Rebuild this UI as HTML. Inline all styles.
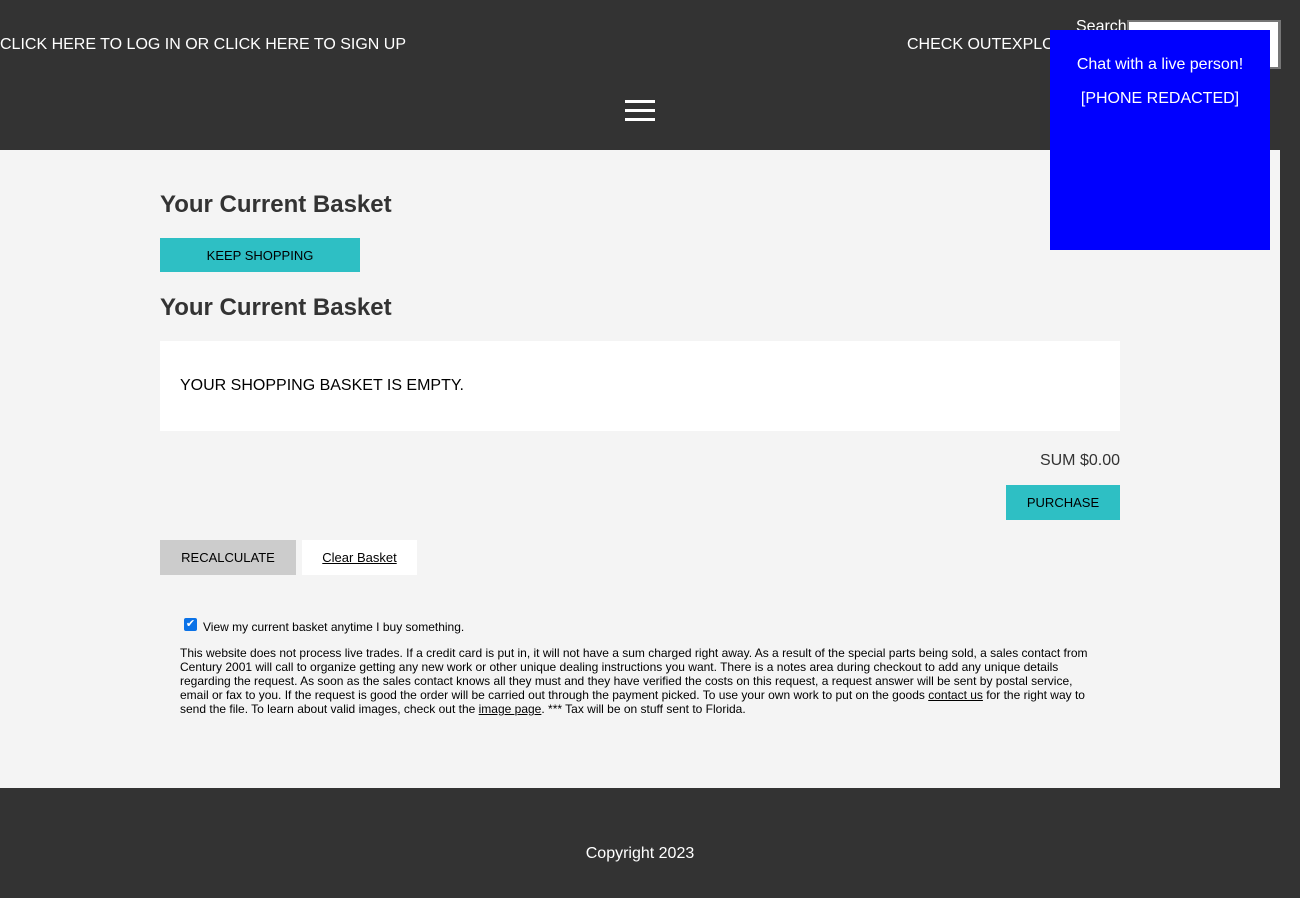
<!DOCTYPE html>
<html><head><style>
body{margin:0;background:#333;font-family:"Liberation Sans",Arial,sans-serif;width:1300px;height:898px;position:relative;overflow:hidden}
.a{position:absolute}
.hdr{color:#fff;font-size:16px}
.main{left:0;top:150px;width:1280px;height:638px;background:#f4f4f4}
h2{margin:0;font-size:24px;color:#333;font-weight:bold}
.btn{font-size:13px;text-align:center;color:#000}
p.s{margin:0;font-size:12px;line-height:14px;color:#000}
</style></head><body>
<div class="a hdr" style="left:0;top:36px">CLICK HERE TO LOG IN OR CLICK HERE TO SIGN UP</div>
<div class="a hdr" style="left:907px;top:36px">CHECK OUTEXPLORE</div>
<div class="a hdr" style="left:1076px;top:18px;font-size:16px">Search</div>
<div class="a" style="left:1127px;top:20px;width:149px;height:45px;background:#fff;border:2px solid #767676;border-right-width:3px"></div>
<div class="a" style="left:625px;top:100px;width:30px;height:3px;background:#fff"></div>
<div class="a" style="left:625px;top:109px;width:30px;height:3px;background:#fff"></div>
<div class="a" style="left:625px;top:118px;width:30px;height:3px;background:#fff"></div>
<div class="a main"></div>
<h2 class="a" style="left:160px;top:191px">Your Current Basket</h2>
<div class="a btn" style="left:160px;top:238px;width:200px;height:34px;line-height:35px;background:#2ebfc4">KEEP SHOPPING</div>
<h2 class="a" style="left:160px;top:294px">Your Current Basket</h2>
<div class="a" style="left:160px;top:341px;width:960px;height:90px;background:#fff"></div>
<div class="a" style="left:180px;top:377px;font-size:16px">YOUR SHOPPING BASKET IS EMPTY.</div>
<div class="a" style="left:1000px;top:452px;width:120px;text-align:right;font-size:16px;color:#333">SUM $0.00</div>
<div class="a btn" style="left:1006px;top:485px;width:114px;height:35px;line-height:35px;background:#2ebfc4">PURCHASE</div>
<div class="a btn" style="left:160px;top:540px;width:136px;height:35px;line-height:35px;background:#ccc">RECALCULATE</div>
<div class="a btn" style="left:302px;top:540px;width:115px;height:35px;line-height:35px;background:#fff;text-decoration:underline">Clear Basket</div>
<div class="a" style="left:184px;top:618px;width:13px;height:13px;background:#0b72e7;border-radius:2px;color:#fff;font-size:11px;line-height:13px;text-align:center">✔</div>
<div class="a" style="left:203px;top:620px;font-size:12px">View my current basket anytime I buy something.</div>
<div class="a" style="left:180px;top:646px;width:920px"><p class="s">This website does not process live trades. If a credit card is put in, it will not have a sum charged right away. As a result of the special parts being sold, a sales contact from Century 2001 will call to organize getting any new work or other unique dealing instructions you want. There is a notes area during checkout to add any unique details regarding the request. As soon as the sales contact knows all they must and they have verified the costs on this request, a request answer will be sent by postal service, email or fax to you. If the request is good the order will be carried out through the payment picked. To use your own work to put on the goods <u>contact us</u> for the right way to send the file. To learn about valid images, check out the <u>image page</u>. *** Tax will be on stuff sent to Florida.</p></div>
<div class="a hdr" style="left:0;width:1280px;top:845px;text-align:center">Copyright 2023</div>
<div class="a" style="left:1050px;top:30px;width:220px;height:220px;background:#00f;color:#fff;text-align:center;font-size:16px">
<div style="margin-top:26px">Chat with a live person!</div>
<div style="margin-top:16px">[PHONE REDACTED]</div></div>
</body></html>
